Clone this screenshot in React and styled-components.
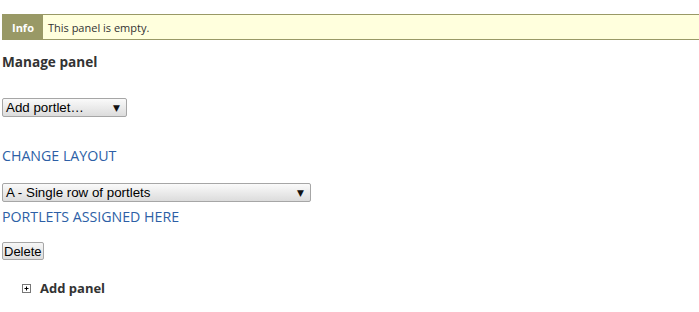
import styled, { createGlobalStyle } from "styled-components";

const GlobalStyle = createGlobalStyle`
  html, body {
    margin: 0;
    padding: 0;
    background: #ffffff;
    font-family: "Open Sans", "DejaVu Sans", sans-serif;
    color: #333333;
  }
`;

const Page = styled.div`
  display: flex;
  flex-direction: column;
  align-items: flex-start;
  padding: 14px 0 0 2px;
`;

const InfoBar = styled.div`
  display: flex;
  align-items: stretch;
  width: calc(100% + 2px);
  height: 24px;
  border-top: 1px solid #999966;
  border-bottom: 1px solid #999966;
  background: #ffffdd;
  font-size: 11px;
`;

const InfoLabel = styled.span`
  display: flex;
  align-items: center;
  padding: 0 9px 0 10px;
  background: #999966;
  color: #ffffff;
  font-weight: bold;
`;

const InfoText = styled.span`
  display: flex;
  align-items: center;
  padding-left: 5px;
  color: #333333;
`;

const Heading = styled.h2`
  margin: 12px 0 0;
  font-size: 13.6px;
  line-height: 20px;
  font-weight: bold;
  color: #333333;
`;

const Select = styled.div`
  box-sizing: border-box;
  display: flex;
  align-items: center;
  justify-content: space-between;
  width: ${(p) => p.$width}px;
  height: 19px;
  margin-top: ${(p) => p.$top}px;
  padding: 0 6px 0 3px;
  border: 1px solid #a6a6a6;
  border-radius: 2px;
  background: linear-gradient(#fafafa, #dcdcdc);
  font-family: "Liberation Sans", Arial, sans-serif;
  font-size: 13.33px;
  color: #000000;
`;

const Arrow = styled.span`
  font-family: "DejaVu Sans", sans-serif;
  font-size: 9px;
  color: #111111;
`;

const SectionLink = styled.a`
  display: block;
  margin-top: ${(p) => p.$top}px;
  font-size: 14.2px;
  line-height: 20px;
  color: #2d5fa6;
  text-transform: uppercase;
  text-decoration: none;
`;

const Button = styled.button`
  box-sizing: border-box;
  height: 18px;
  margin-top: 15px;
  padding: 0 1px;
  border: 1px solid #a6a6a6;
  border-radius: 2px;
  background: linear-gradient(#f6f6f6, #dedede);
  font-family: "Liberation Sans", Arial, sans-serif;
  font-size: 13px;
  color: #000000;
`;

const AddRow = styled.div`
  display: flex;
  align-items: center;
  gap: 8px;
  margin: 18px 0 0 19px;
  line-height: 20px;
  font-size: 13px;
  font-weight: bold;
  color: #333333;
`;

export default function App() {
  return (
    <>
      <GlobalStyle />
      <Page>
        <InfoBar>
          <InfoLabel>Info</InfoLabel>
          <InfoText>This panel is empty.</InfoText>
        </InfoBar>
        <Heading>Manage panel</Heading>
        <Select $width={125} $top={26}>
          <span>Add portlet…</span>
          <Arrow>▼</Arrow>
        </Select>
        <SectionLink $top={29}>Change layout</SectionLink>
        <Select $width={309} $top={17}>
          <span>A - Single row of portlets</span>
          <Arrow>▼</Arrow>
        </Select>
        <SectionLink $top={5}>Portlets assigned here</SectionLink>
        <Button>Delete</Button>
        <AddRow>
          <svg width="11" height="11" viewBox="0 0 11 11">
            <rect x="1.5" y="1.5" width="8" height="8" fill="#fff" stroke="#777" />
            <path d="M3.5 5.5h4M5.5 3.5v4" stroke="#000" />
          </svg>
          <span>Add panel</span>
        </AddRow>
      </Page>
    </>
  );
}
